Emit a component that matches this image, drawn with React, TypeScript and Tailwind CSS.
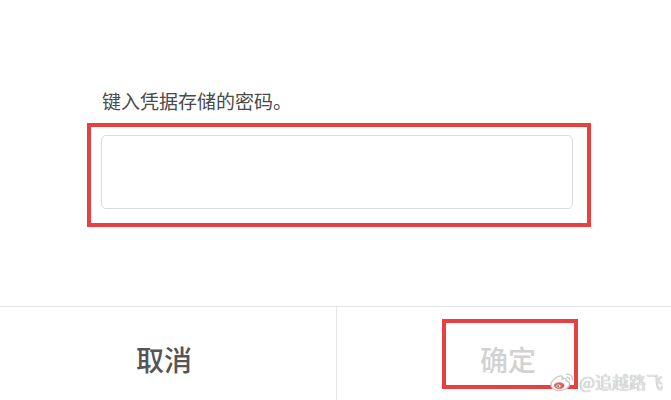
import { useState } from 'react';

const FONT = '"Noto Sans CJK SC", "Noto Sans", sans-serif';

function WeiboMark() {
  return (
    <svg width="30" height="20" viewBox="0 0 30 20" fill="none">
      {/* head */}
      <path
        d="M4 12.5c0-3.6 5-7.8 9.2-8.6 2.2-.4 2.6 1.2 1.9 3 2.6-1.2 4.6-.8 4 1.6 2 .6 3.4 1.6 3.4 3.6 0 3.2-4.8 6.4-10.2 6.4C7.6 18.5 4 16.2 4 12.5z"
        stroke="#c9c9c9"
        strokeWidth="1.4"
        fill="#fff"
      />
      {/* face */}
      <ellipse cx="12.2" cy="13.6" rx="5.2" ry="3.4" fill="#e0463e" opacity="0.85" />
      <ellipse cx="11.4" cy="14" rx="2.2" ry="1.6" fill="#fff" />
      <circle cx="11.2" cy="14.1" r="0.9" fill="#444" />
      {/* waves */}
      <path d="M19.5 2.2c3.4-.6 6.6 2.2 6 5.8" stroke="#c9c9c9" strokeWidth="1.4" strokeLinecap="round" />
      <path d="M19.8 5.2c1.6-.2 3 1.1 2.8 2.7" stroke="#c9c9c9" strokeWidth="1.3" strokeLinecap="round" />
    </svg>
  );
}

export default function App() {
  const [password, setPassword] = useState('');

  return (
    <div className="relative w-[671px] h-[400px] bg-white overflow-hidden flex flex-col" style={{ fontFamily: FONT }}>
      {/* Prompt + field */}
      <div className="h-[306px] flex flex-col pl-[87px] pt-[88px]">
        <div className="pl-[15px] text-[19px] leading-[25px] text-[#4a4a4a]">键入凭据存储的密码。</div>
        <div className="mt-[10px] w-[504px] h-[104px] border-4 border-[#e8403f] pl-[10px] pt-[8px]">
          <input
            type="password"
            value={password}
            onChange={(e) => setPassword(e.target.value)}
            className="w-[472px] h-[74px] rounded-[5px] border border-[#dcdcdc] bg-white px-3 text-[18px] outline-none"
          />
        </div>
      </div>

      {/* Buttons */}
      <div className="flex-1 flex border-t border-[#e6e6e6]">
        <button className="w-[337px] border-r border-[#e6e6e6] flex items-start pl-[136px] pt-[36px] text-[28px] leading-[32px] font-medium text-[#555555]">
          取消
        </button>
        <div className="flex-1 pl-[105px] pt-[12px]">
          <div className="w-[136px] h-[70px] border-4 border-[#e8403f] pl-[34px] pt-[20px]">
            <button disabled className="text-[28px] leading-[32px] font-medium text-[#d2d2d2]">
              确定
            </button>
          </div>
        </div>
      </div>

      {/* watermark */}
      <div className="absolute left-[547px] top-[372px] flex items-center gap-[2px] select-none">
        <WeiboMark />
        <span
          className="text-[17px] leading-[20px] text-[#e2e2e2]"
          style={{ textShadow: '0 0 1px #9a9a9a' }}
        >
          @追越路飞
        </span>
      </div>
    </div>
  );
}
